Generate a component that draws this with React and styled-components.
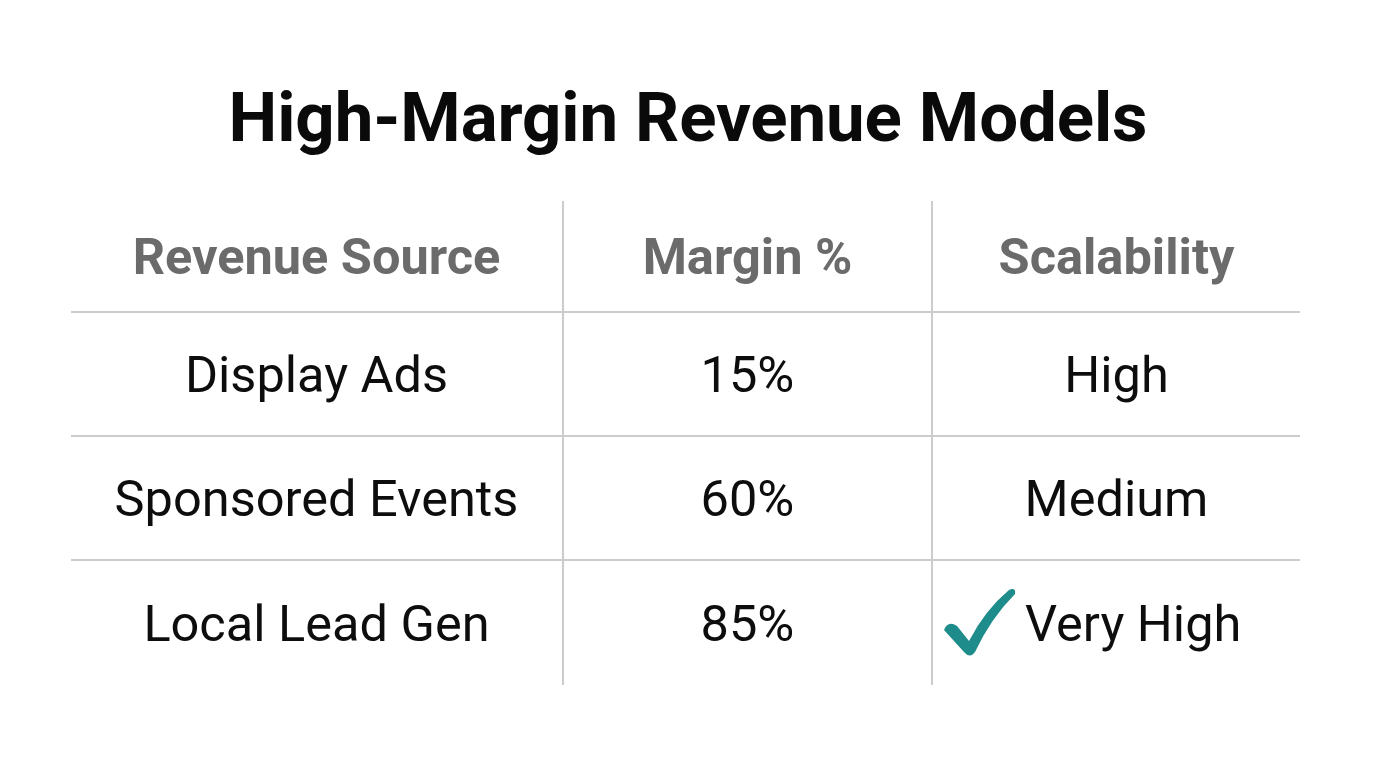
import React from 'react';
import styled, {createGlobalStyle} from 'styled-components';

const Global = createGlobalStyle`
    html, body {
        margin: 0;
        padding: 0;
        background: #ffffff;
    }
    body {
        font-family: Roboto, "Liberation Sans", sans-serif;
        color: #111111;
    }
`;

let Page = styled.div`
    width: 1376px;
    height: 768px;
    box-sizing: border-box;
    padding-top: 78px;
    display: flex;
    flex-direction: column;
    align-items: center;
    background: #ffffff;
`;

let Title = styled.h1`
    margin: 0;
    font-family: Roboto, sans-serif;
    font-weight: 700;
    font-size: 69px;
    line-height: 80px;
    color: #0a0a0a;
    letter-spacing: -0.1px;
`;

let Table = styled.div`
    margin-top: 43px;
    align-self: flex-start;
    margin-left: 71px;
    display: grid;
    grid-template-columns: 491px 369px 369px;
    grid-template-rows: 112px 124px 124px 124px;
`;

let Cell = styled.div`
    display: flex;
    align-items: center;
    justify-content: ${props => props.start ? 'flex-start' : 'center'};
    padding-left: ${props => props.start ? '10px' : '0'};
    gap: 8px;
    box-sizing: border-box;
    border-left: ${props => props.first ? 'none' : '2px solid #cccccc'};
    border-bottom: ${props => props.last ? 'none' : '2px solid #cccccc'};
    font-size: 50.5px;
    font-weight: ${props => props.head ? 700 : 400};
    color: ${props => props.head ? '#6b6b6b' : '#0d0d0d'};
`;

function Check() {
    return (
        <svg width="74" height="70" viewBox="0 0 74 70">
            <path d="M1 42 Q5 32 14 38 L26 53 Q42 22 66 2 Q73 -1 72 6 Q48 30 32 64 Q27 71 21 64 Z"
                fill="#1e8c8a" />
        </svg>
    );
}

const rows = [
    ['Display Ads', '15%', 'High'],
    ['Sponsored Events', '60%', 'Medium'],
    ['Local Lead Gen', '85%', 'Very High'],
];

function App() {
    return (
        <Page>
            <Global />
            <Title>High-Margin Revenue Models</Title>
            <Table>
                <Cell head first>Revenue Source</Cell>
                <Cell head>Margin %</Cell>
                <Cell head>Scalability</Cell>
                {rows.map((r, i) => {
                    let last = i === rows.length - 1;
                    return (
                        <React.Fragment key={r[0]}>
                            <Cell first last={last}>{r[0]}</Cell>
                            <Cell last={last}>{r[1]}</Cell>
                            {r[2] === 'Very High'
                                ? <Cell last={last} start><Check />{r[2]}</Cell>
                                : <Cell last={last}>{r[2]}</Cell>}
                        </React.Fragment>
                    );
                })}
            </Table>
        </Page>
    );
}

export default App;
